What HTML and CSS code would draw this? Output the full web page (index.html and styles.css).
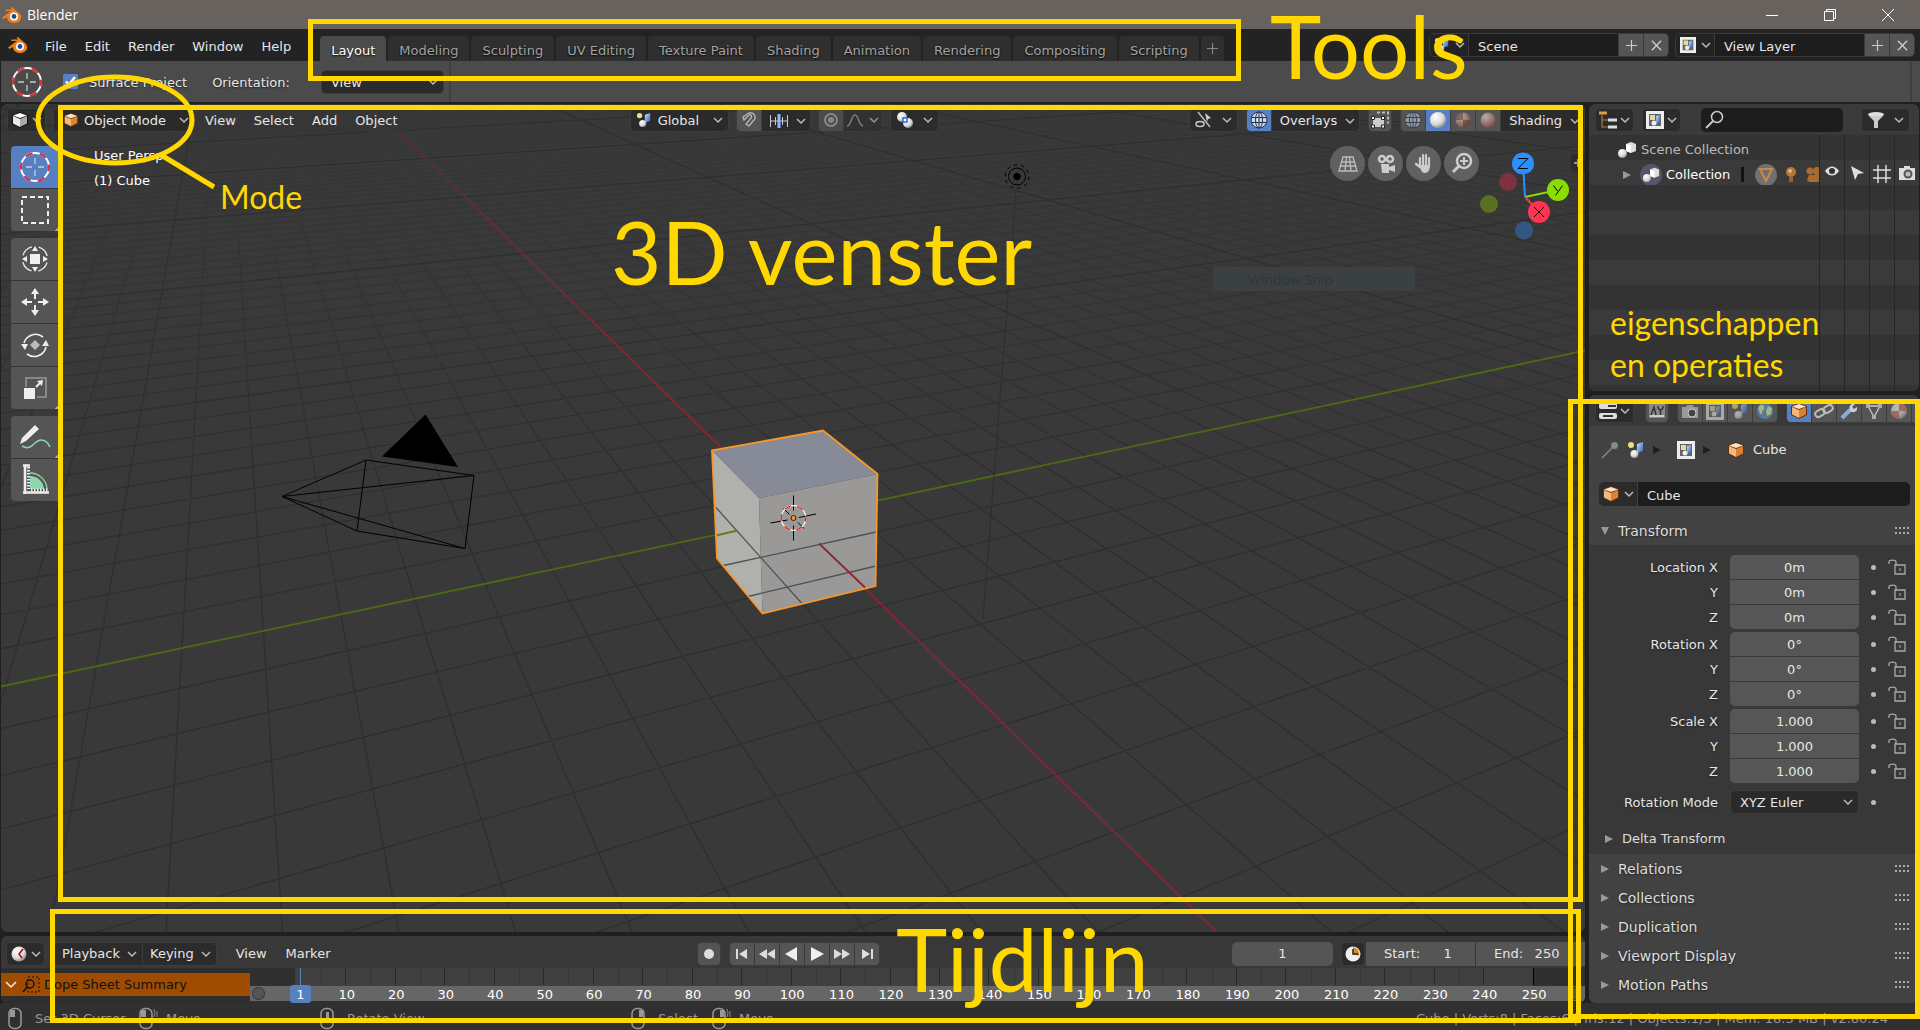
FILE: index.html
```html
<!DOCTYPE html>
<html lang="nl">
<head>
<meta charset="utf-8">
<title>Blender</title>
<link rel="stylesheet" href="styles.css">
</head>
<body>
<svg class="defs" aria-hidden="true">
  <defs>
    <linearGradient id="gBlue" x1="0" y1="0" x2="1" y2="1"><stop offset="0" stop-color="#cfe0f8"/><stop offset="1" stop-color="#2a62c0"/></linearGradient>
    <radialGradient id="gBall" cx=".35" cy=".3" r=".8"><stop offset="0" stop-color="#fff"/><stop offset=".6" stop-color="#d8d8d8"/><stop offset="1" stop-color="#777"/></radialGradient>
    <radialGradient id="gRed" cx=".35" cy=".3" r=".8"><stop offset="0" stop-color="#b8aeaa"/><stop offset="1" stop-color="#74493f"/></radialGradient>
  </defs>
  <symbol id="chev" viewBox="0 0 10 10"><path d="M1 3l4 4 4-4" fill="none" stroke="#bbb" stroke-width="1.5"/></symbol>
  <symbol id="plus" viewBox="0 0 14 14"><path d="M7 1v12M1 7h12" stroke="#ccc" stroke-width="1.3"/></symbol>
  <symbol id="cross" viewBox="0 0 14 14"><path d="M2 2l10 10M12 2L2 12" stroke="#ccc" stroke-width="1.5"/></symbol>
  <symbol id="logo" viewBox="0 0 20 16"><path d="M0 10.500L9 4H3.500V2.500H10L8.500 1 10 0l8 7c3 4 0 9-6 9-4 0-7-2.500-7-6l-3.500 2z" fill="#ee7f1a"/><circle cx="12" cy="9.500" r="4" fill="#fff"/><circle cx="12" cy="9.500" r="2.400" fill="#174f9c"/></symbol>
  <symbol id="cubeW" viewBox="0 0 18 18"><path d="M9 1l8 3v9l-8 4-8-4V4z" fill="#111"/><path d="M2 5l7 3v8l-7-3.500z" fill="#e8e8e8"/><path d="M9 8l7-3v7.500L9 16z" fill="#aaa"/><path d="M2 4.500L9 2l7 2.500L9 7z" fill="#fff"/></symbol>
  <symbol id="cubeO" viewBox="0 0 18 18"><path d="M9 1l8 3v9l-8 4-8-4V4z" fill="#5b3013"/><path d="M2 5l7 3v8l-7-3.500z" fill="#f3b67c"/><path d="M9 8l7-3v7.500L9 16z" fill="#dd8232"/><path d="M2 4.500L9 2l7 2.500L9 7z" fill="#ffe3c0"/></symbol>
  <symbol id="scene" viewBox="0 0 18 18"><circle cx="4" cy="4" r="3" fill="#e9e17a"/><path d="M10 3l6-2v9l-6 2z" fill="url(#gBlue)"/><circle cx="7.500" cy="13" r="4" fill="url(#gBall)"/></symbol>
  <symbol id="layer" viewBox="0 0 18 18"><path d="M0 0h18v18H0z" fill="#eee"/><path d="M3 3h12v12H3z" fill="#60646a"/><path d="M4 4h5v5H4z" fill="#ead99a"/><path d="M10 5l4-1v7l-4 1z" fill="url(#gBlue)"/><circle cx="8" cy="12" r="2.500" fill="#eee"/></symbol>
  <symbol id="cursor" viewBox="0 0 32 32"><circle cx="16" cy="16" r="14" fill="none" stroke="#fff" stroke-width="2"/><circle cx="16" cy="16" r="14" fill="none" stroke="#d92b36" stroke-width="2" stroke-dasharray="7.330 7.330" stroke-dashoffset="3"/><path d="M16 7v6M16 19v6M7 16h6M19 16h6" stroke="#ccc" stroke-width="1.300"/></symbol>
  <symbol id="coll" viewBox="0 0 20 20"><path d="M9 4l5-2 5 2v7l-5 2-5-2z" fill="#ddd"/><path d="M9 4l5 1.500V13l-5-2z" fill="#fff"/><circle cx="5.500" cy="13.500" r="4.500" fill="url(#gBall)"/></symbol>
  <symbol id="mouse" viewBox="0 0 20 24"><rect x="2" y="1.500" width="12" height="20" rx="5" fill="none" stroke="#999" stroke-width="1.500"/></symbol>
  <symbol id="lock" viewBox="0 0 18 16"><path d="M1 5V3c0-2.500 7-2.500 7 0v3M7 6h10v9H7z" fill="none" stroke="#aaa" stroke-width="1.300"/><path d="M12 9v3" stroke="#aaa"/></symbol>
  <symbol id="grip" viewBox="0 0 14 7"><path d="M0 1h14M0 6h14" stroke="#aaa" stroke-width="2" stroke-dasharray="2 2"/></symbol>
  <symbol id="tri" viewBox="0 0 8 8"><path d="M0 0l8 4-8 4z" fill="#999"/></symbol>
  <symbol id="globe" viewBox="0 0 18 18"><circle cx="9" cy="9" r="8" fill="#c9d8f2"/><ellipse cx="9" cy="9" rx="3.500" ry="8" fill="none" stroke="#234"/><path d="M9 1v16M1.500 6.500h15M1.500 11.500h15" stroke="#234"/><circle cx="9" cy="9" r="8" fill="none" stroke="#234"/></symbol>
</svg>

<div class="app">
  <header class="titlebar">
    <svg class="i-logo"><use href="#logo"/></svg>
    <span class="apptitle">Blender</span>
    <div class="winbtns">
      <button aria-label="Minimize"><svg width="12" height="12"><path d="M0 6.500h12" stroke="#fff"/></svg></button>
      <button aria-label="Restore"><svg width="12" height="12"><path d="M.5 2.500h9v9h-9zM2.500 2V.5h9v9H10" fill="none" stroke="#fff"/></svg></button>
      <button aria-label="Close"><svg width="12" height="12"><path d="M0 0l12 12M12 0L0 12" stroke="#fff"/></svg></button>
    </div>
  </header>

  <div class="menubar">
    <svg class="i-logo"><use href="#logo"/></svg>
    <nav class="menus"><button>File</button><button>Edit</button><button>Render</button><button>Window</button><button>Help</button></nav>
    <nav class="tabs">
      <button class="on">Layout</button><button>Modeling</button><button>Sculpting</button><button>UV Editing</button><button>Texture Paint</button><button>Shading</button><button>Animation</button><button>Rendering</button><button>Compositing</button><button>Scripting</button><button class="add" aria-label="Add workspace"><svg class="i12 faint"><use href="#plus"/></svg></button>
    </nav>
    <div class="datablocks">
      <div class="datablock"><button class="pick" aria-label="Browse scene"><svg class="i16"><use href="#scene"/></svg><svg class="i10"><use href="#chev"/></svg></button><input aria-label="Scene name" value="Scene"><button aria-label="New scene"><svg class="i12"><use href="#plus"/></svg></button><button aria-label="Remove scene"><svg class="i12"><use href="#cross"/></svg></button></div>
      <div class="datablock"><button class="pick" aria-label="Browse view layer"><svg class="i16"><use href="#layer"/></svg><svg class="i10"><use href="#chev"/></svg></button><input aria-label="View layer name" value="View Layer"><button aria-label="New view layer"><svg class="i12"><use href="#plus"/></svg></button><button aria-label="Remove view layer"><svg class="i12"><use href="#cross"/></svg></button></div>
    </div>
  </div>

  <div class="toolsettings">
    <svg class="i32"><use href="#cursor"/></svg>
    <label class="check"><input type="checkbox" checked><span>Surface Project</span></label>
    <label class="orient"><span>Orientation:</span><span class="drop"><select><option>View</option></select><svg class="i10"><use href="#chev"/></svg></span></label>
    <i class="vsep"></i><i class="vsep last"></i>
  </div>

  <main class="main">
    <div class="left">
      <section class="viewport">
        <svg class="scene" viewBox="1 104 1584 829" preserveAspectRatio="xMidYMid slice">
          <defs>
            <linearGradient id="fade" gradientUnits="userSpaceOnUse" x1="0" y1="104" x2="0" y2="933"><stop offset="0" stop-color="#fff" stop-opacity=".12"/><stop offset=".15" stop-color="#fff" stop-opacity=".35"/><stop offset=".45" stop-color="#fff" stop-opacity=".9"/><stop offset="1" stop-color="#fff"/></linearGradient>
            <mask id="fadeMask" maskUnits="userSpaceOnUse" x="0" y="0" width="1600" height="1000"><rect width="1600" height="1000" fill="url(#fade)"/></mask>
            <linearGradient id="axisX" gradientUnits="userSpaceOnUse" x1="390" y1="123" x2="640" y2="370"><stop offset="0" stop-color="#862434" stop-opacity=".3"/><stop offset="1" stop-color="#862434"/></linearGradient>
          </defs>
          <g mask="url(#fadeMask)"><path id="minor" class="minor"/></g>
          <path id="major" class="major"/>
          <path d="M370 104l351 344M820 545l397 388" stroke="url(#axisX)" stroke-width="1.800"/>
          <path d="M1 687L793 519 1585 351" stroke="#4c6b10" stroke-width="1.800"/>
          <path d="M1016 190L983 620" stroke="#2e2e2e"/>
          <g class="light"><circle cx="1017" cy="177" r="3.300" fill="#000"/><circle cx="1017" cy="177" r="8.500"/><circle cx="1017" cy="177" r="11.800" stroke-dasharray="3.700 3.700"/></g>
          <path d="M425.500 415l32.500 52.500-76-10.500z" fill="#000"/>
          <path class="cam" d="M282 497l84-36.500 108 15.500-9 73-108-17.500zM282 497l192-21M282 497l183 52M366 460.500l-9 71"/>
          <path d="M712 451l111-20 54.500 43.500-118.500 24z" fill="#868b97"/>
          <path d="M712 451l47 47.500 3.500 115.500L717 559z" fill="#b0b1ad"/>
          <path d="M759 498.500l118.500-24-2 112-113 27.500z" fill="#9b9997"/>
          <path d="M716 508l85.500 95.500M723.500 566L876 532.500M748 597l128-30.500" stroke="#505050" stroke-width="1.300"/>
          <path d="M716 536l21.500-5" stroke="#628017" stroke-width="1.800"/><path d="M819 544l46 44" stroke="#8a2533" stroke-width="1.800"/>
          <path d="M712 451l111-20 54.500 43.500-2 112-113 27.500L717 559z" fill="none" stroke="#f9962a" stroke-width="1.800"/>
          <path d="M793.500 496v15M793.500 526v15M770.500 523.500l17-3M799 518l17-3.500M783.500 509l6 6M798 523l6 6" stroke="#000"/>
          <circle cx="793.500" cy="518.500" r="12.300" fill="none" stroke="#fff" stroke-width="1.200"/><circle cx="793.500" cy="518.500" r="12.300" fill="none" stroke="#f00" stroke-width="1.200" stroke-dasharray="6.440 6.440" stroke-dashoffset="3"/>
          <circle cx="793.500" cy="518.500" r="2.500" fill="#f9962a" stroke="#222"/>
        </svg>

        <div class="vheader">
          <button class="box" aria-label="Editor type"><svg class="i18"><use href="#cubeW"/></svg><svg class="i10"><use href="#chev"/></svg></button>
          <label class="drop mode"><svg class="i16"><use href="#cubeO"/></svg><select aria-label="Mode"><option>Object Mode</option></select><svg class="i10"><use href="#chev"/></svg></label>
          <nav class="vmenus"><button>View</button><button>Select</button><button>Add</button><button>Object</button></nav>
          <div class="vmid">
            <label class="drop global"><svg class="i16"><use href="#scene"/></svg><select aria-label="Transform orientation"><option>Global</option></select><svg class="i10"><use href="#chev"/></svg></label>
            <div class="grp"><button class="lit" aria-label="Snap"><svg width="18" height="18"><path d="M3 6l6-4c6-1 8 5 4 8l-4 5-3-2 5-6c2-3-1-4-3-2L4 9z" fill="none" stroke="#bbb" stroke-width="1.300"/></svg></button><button class="wide" aria-label="Snap to"><svg width="18" height="16"><path d="M.5 2v12M17.500 2v12M5.500 4v8M12.500 4v8M0 8h18" stroke="#ccc"/><path d="M9 1v14" stroke="#8fb7ff" stroke-width="3"/></svg><svg class="i10"><use href="#chev"/></svg></button></div>
            <div class="grp dim"><button class="lit" aria-label="Proportional editing"><svg width="18" height="18"><circle cx="9" cy="9" r="6" fill="none" stroke="#aaa" stroke-width="2"/><circle cx="9" cy="9" r="3" fill="#aaa"/></svg></button><button class="prop" aria-label="Falloff"><svg width="18" height="14"><path d="M1 13c5-1 4-11 8-11s3 10 8 11" fill="none" stroke="#999" stroke-width="1.500"/></svg><svg class="i10"><use href="#chev"/></svg></button></div>
            <button class="box pivot" aria-label="Pivot point"><svg width="18" height="18"><circle cx="6" cy="6" r="5" fill="url(#gBall)"/><circle cx="12" cy="12" r="5" fill="url(#gBall)"/><path d="M7 7h4v4H7z" fill="#fff" stroke="#2a6cd8" stroke-width="1.500"/></svg><svg class="i10"><use href="#chev"/></svg></button>
          </div>
          <div class="vright">
            <button class="box pivot" aria-label="Object types"><svg width="18" height="18"><path d="M3 1l12 15" stroke="#bbb" stroke-width="1.500"/><path d="M10 2l6 5-3 1-1 3z" fill="#ccc"/><ellipse cx="5" cy="13" rx="4" ry="2.500" fill="none" stroke="#ccc" stroke-width="1.500"/></svg><svg class="i10"><use href="#chev"/></svg></button>
            <div class="grp"><button class="sel" aria-label="Show overlays"><svg class="i18"><use href="#globe"/></svg></button><button class="wide">Overlays<svg class="i10"><use href="#chev"/></svg></button></div>
            <button class="box lit" aria-label="X-ray"><svg width="20" height="18"><path d="M3 7h11v9H3z" fill="#ccc"/><path d="M1.500 5.500h3v3h-3zM11.500 5.500h3v3h-3zM1.500 14h3v3h-3zM11.500 14h3v3h-3z" fill="#fff" stroke="#222"/><path d="M7 1.500h11v11" fill="none" stroke="#bbb" stroke-width="2" stroke-dasharray="3 2"/></svg></button>
            <div class="grp"><button class="lit" aria-label="Wireframe"><svg class="i18 faint"><use href="#globe"/></svg></button><button class="sel" aria-label="Solid"><svg width="18" height="18"><circle cx="9" cy="9" r="8" fill="url(#gBall)"/></svg></button><button class="lit" aria-label="Look dev"><svg width="18" height="18"><circle cx="9" cy="9" r="7.500" fill="url(#gRed)"/><path d="M9 1.500V9H1.500A7.500 7.500 0 0 1 9 1.500M9 16.500V9h7.500A7.500 7.500 0 0 1 9 16.500" fill="#583028" opacity=".5"/></svg></button><button class="lit" aria-label="Rendered"><svg width="18" height="18"><circle cx="9" cy="9" r="7.500" fill="url(#gRed)"/></svg></button><button class="wide">Shading<svg class="i10"><use href="#chev"/></svg></button></div>
          </div>
        </div>

        <div class="vbody">
          <div class="toolbar">
            <div class="tools">
              <button class="sel" aria-label="Cursor"><svg class="i32"><use href="#cursor"/></svg></button>
              <button class="more" aria-label="Select box"><svg width="32" height="32"><rect x="3" y="3" width="26" height="26" fill="none" stroke="#eee" stroke-width="2" stroke-dasharray="5 3"/></svg></button>
            </div>
            <div class="tools">
              <button aria-label="Transform"><svg width="32" height="32"><path d="M11 11h10v10H11z" fill="#eee"/><path d="M16 3l3 5h-6zM16 29l3-5h-6zM3 16l5-3v6zM29 16l-5-3v6z" fill="#eee"/><circle cx="16" cy="16" r="12.500" fill="none" stroke="#eee" stroke-width="1.300" stroke-dasharray="12.600 7.030" stroke-dashoffset="-3.500"/></svg></button>
              <button aria-label="Move"><svg width="32" height="32"><path d="M16 2l4 6h-8zM16 30l4-6h-8zM2 16l6-4v8zM30 16l-6-4v8z" fill="#eee"/><path d="M16 8v5M16 19v5M8 16h5M19 16h5" stroke="#eee" stroke-width="2"/></svg></button>
              <button aria-label="Rotate"><svg width="32" height="32"><path d="M5 14A12 12 0 0 1 24 8M27 18A12 12 0 0 1 8 25" fill="none" stroke="#eee" stroke-width="1.600"/><path d="M2 15h7l-3 6zM23 17h7l-3-6z" fill="#eee"/><path d="M16 11l5 5-5 5-5-5z" fill="#bbb"/></svg></button>
              <button class="more" aria-label="Scale"><svg width="32" height="32"><path d="M7 15V6h20v19h-9" fill="none" stroke="#999" stroke-width="1.500"/><path d="M5 16h11v11H5z" fill="#eee"/><path d="M17 15l5-5" stroke="#eee" stroke-width="2"/><path d="M24 8l-1 6-5-5z" fill="#eee"/></svg></button>
            </div>
            <div class="tools">
              <button class="more" aria-label="Annotate"><svg width="34" height="32"><path d="M4 25c10 6 12-6 19-6 4 0 7 2 9 7" fill="none" stroke="#8fd6ae" stroke-width="1.600"/><path d="M2 23l2-6L17 4l4 4L8 20z" fill="#eee"/></svg></button>
              <button aria-label="Measure"><svg width="32" height="32"><path d="M11 12a14 14 0 0 1 14 13H11z" fill="#8fd6ae"/><path d="M11 9a17 17 0 0 1 17 16" fill="none" stroke="#8fd6ae" stroke-width="1.300"/><path d="M4 1.500h7M6 2v28M4 28.500h26" stroke="#eee" stroke-width="2.600"/><path d="M9.500 3v22" stroke="#eee" stroke-width="3" stroke-dasharray="1.500 1.500"/><path d="M12 26h18" stroke="#eee" stroke-width="3" stroke-dasharray="1.500 1.500"/></svg></button>
            </div>
          </div>
          <p class="vinfo">User Persp<br>(1) Cube</p>
          <div class="ghost">Window Snip</div>
          <div class="nav">
            <button aria-label="Perspective"><svg width="22" height="20"><path d="M6 3h10l4 14H2zM4.500 8h13M3.500 12h15M9.500 3L8 17M12.500 3L14 17" fill="none" stroke="#bbb" stroke-width="1.400"/></svg></button>
            <button aria-label="Camera view"><svg width="22" height="22"><circle cx="7" cy="6" r="3" fill="none" stroke="#ccc" stroke-width="2.500"/><circle cx="15" cy="6" r="3" fill="none" stroke="#ccc" stroke-width="2.500"/><path d="M6 11h8v3l6-2v7l-6-2v3H7z" fill="#ccc"/></svg></button>
            <button aria-label="Move view"><svg width="22" height="22"><path d="M3 11l4 3M7 13V5M10 12V2M13 12V2M16 13V5" stroke="#ccc" stroke-width="2.200" stroke-linecap="round"/><path d="M6 12h11c0 5-2 8-5 8s-4-2-6-8z" fill="#ccc"/></svg></button>
            <button aria-label="Zoom view"><svg width="24" height="24"><circle cx="14" cy="9" r="7" fill="none" stroke="#ccc" stroke-width="2.500"/><path d="M14 5v8M10 9h8" stroke="#ccc" stroke-width="2"/><path d="M9 14l-6 6" stroke="#ccc" stroke-width="3"/></svg></button>
            <svg class="gizmo" viewBox="0 0 90 96"><circle cx="28" cy="36" r="9" fill="#7d323f"/><circle cx="9" cy="58" r="9" fill="#587020"/><circle cx="44" cy="84.500" r="9" fill="#335880"/><path d="M43 18l2 33" stroke="#2b90ff" stroke-width="2"/><path d="M45 51l33-7" stroke="#8bdc00" stroke-width="2"/><path d="M45 51l14 15" stroke="#ff3352" stroke-width="2"/><circle cx="43" cy="17.500" r="11" fill="#2b90ff"/><circle cx="78" cy="44" r="11" fill="#8bdc00"/><circle cx="59" cy="66" r="11" fill="#ff3352"/><path d="M38 12.500h10l-10 10h10M73.500 39.500l4 5.500M82.500 39.500l-7 10M54 61l10 10M64 61L54 71" fill="none" stroke="#000"/></svg>
            <button class="npanel" aria-label="Show sidebar"><svg width="10" height="10"><path d="M5 1v8M1 5h8" stroke="#999" stroke-width="2"/></svg></button>
          </div>
        </div>
      </section>

      <section class="timeline">
        <div class="theader">
          <button class="box" aria-label="Editor type"><svg width="18" height="18"><circle cx="9" cy="9" r="7.500" fill="url(#gBall)"/><path d="M13 4L9 9l3 4" fill="none" stroke="#b00" stroke-width="1.500"/></svg><svg class="i10"><use href="#chev"/></svg></button>
          <div class="grp"><button class="wide">Playback<svg class="i10"><use href="#chev"/></svg></button><button class="wide">Keying<svg class="i10"><use href="#chev"/></svg></button></div>
          <nav class="tmenus"><button>View</button><button>Marker</button></nav>
          <div class="transport">
            <button class="box lit rec" aria-label="Auto keying"><svg width="12" height="12"><circle cx="6" cy="6" r="5" fill="#ddd"/></svg></button>
            <div class="grp play">
              <button aria-label="Jump to start"><svg width="14" height="12"><path d="M1 1h2v10H1zM12 1v10L4 6z" fill="#ddd"/></svg></button>
              <button aria-label="Previous keyframe"><svg width="16" height="12"><path d="M8 1v10L0 6zM16 1v10L8 6z" fill="#ddd"/></svg></button>
              <button aria-label="Play reversed"><svg width="14" height="16"><path d="M12 1v14L0 8z" fill="#eee"/></svg></button>
              <button aria-label="Play"><svg width="14" height="16"><path d="M1 1v14l13-7z" fill="#eee"/></svg></button>
              <button aria-label="Next keyframe"><svg width="16" height="12"><path d="M0 1v10l8-5zM8 1v10l8-5z" fill="#ddd"/></svg></button>
              <button aria-label="Jump to end"><svg width="14" height="12"><path d="M11 1h2v10h-2zM2 1v10l8-5z" fill="#ddd"/></svg></button>
            </div>
          </div>
          <div class="frames">
            <input class="cur" aria-label="Current frame" value="1">
            <div class="range"><button class="box" aria-label="Preview range"><svg width="18" height="18"><circle cx="9" cy="9" r="7.500" fill="#eee"/><path d="M9 9V2a7 7 0 0 1 6 9z" fill="#e0852c"/><path d="M9 4v5h5" stroke="#222" stroke-width="1.500"/></svg></button>
            <label>Start:<input value="1"></label><label>End:<input value="250"></label></div>
          </div>
        </div>
        <div class="tbody">
          <div class="channels"><div class="channel"><svg width="14" height="14"><path d="M2 4l5 5 5-5" fill="none" stroke="#eee" stroke-width="1.500"/></svg><svg width="18" height="18"><rect x="6" y="1" width="11" height="15" fill="none" stroke="#111" stroke-dasharray="2 2"/><circle cx="8" cy="8" r="4" fill="none" stroke="#111" stroke-width="1.500"/><path d="M5 11l-4 5" stroke="#111" stroke-width="1.500"/></svg>Dope Sheet Summary</div></div>
          <div class="graph">
            <div class="pre"><i class="knob"></i><b>1</b></div>
            <ol class="ruler"><li>10</li><li>20</li><li>30</li><li>40</li><li>50</li><li>60</li><li>70</li><li>80</li><li>90</li><li>100</li><li>110</li><li>120</li><li>130</li><li>140</li><li>150</li><li>160</li><li>170</li><li>180</li><li>190</li><li>200</li><li>210</li><li>220</li><li>230</li><li>240</li><li>250</li></ol>
            <div class="post"><i class="knob"></i></div>
          </div>
        </div>
      </section>
    </div>

    <aside class="right">
      <section class="outliner">
        <div class="oheader">
          <button class="box" aria-label="Editor type"><svg width="18" height="18"><path d="M0 2h8" stroke="#e29a45" stroke-width="3"/><path d="M3 4v12h6M3 9h6" fill="none" stroke="#ad7b42" stroke-width="1.200"/><path d="M9 9h9M9 16h9" stroke="#ddd" stroke-width="3"/></svg><svg class="i10"><use href="#chev"/></svg></button>
          <button class="box" aria-label="Display mode"><svg class="i18"><use href="#layer"/></svg><svg class="i10"><use href="#chev"/></svg></button>
          <label class="search"><svg width="20" height="20"><circle cx="12" cy="7" r="5.500" fill="none" stroke="#ccc" stroke-width="1.500"/><path d="M8 11l-7 7" stroke="#ccc" stroke-width="1.800"/></svg><input type="search" aria-label="Filter outliner"></label>
          <button class="box filter" aria-label="Filter"><svg width="18" height="18"><ellipse cx="9" cy="3.500" rx="8" ry="2.500" fill="#ddd"/><path d="M2 5l5 5v7h4v-7l5-5z" fill="#ccc"/></svg><svg class="i10"><use href="#chev"/></svg></button>
        </div>
        <div class="tree">
          <div class="row root"><svg class="i20"><use href="#coll"/></svg>Scene Collection</div>
          <div class="row child"><svg class="i8"><use href="#tri"/></svg><span class="disc"><svg class="i18"><use href="#coll"/></svg></span><span class="name">Collection</span><i class="bar"></i>
            <span class="disc mesh"><svg width="16" height="16"><path d="M2 2h12L8 14z" fill="none" stroke="#c98647" stroke-width="2.200"/></svg></span>
            <svg width="14" height="20"><circle cx="7" cy="7" r="5" fill="#b47538"/><path d="M5 12h4v5H5z" fill="#976233"/><circle cx="6" cy="6" r="2" fill="#e0b27c"/></svg>
            <svg width="14" height="18"><circle cx="4" cy="5" r="3.500" fill="#ac6b2d"/><circle cx="11" cy="5" r="4" fill="#ac6b2d"/><path d="M3 9h11v7H3l-2-2z" fill="#ac6b2d"/></svg>
          </div>
          <div class="cols">
            <span><svg width="16" height="12"><path d="M1 6c4-6 10-6 14 0-4 6-10 6-14 0z" fill="#ddd"/><circle cx="8" cy="6" r="3" fill="#333"/></svg></span>
            <span><svg width="16" height="16"><path d="M2 1l13 7-6 1-3 6z" fill="#ddd"/></svg></span>
            <span><svg width="18" height="18"><path d="M5 0v18M13 0v18M0 5h18M0 13h18" stroke="#ddd" stroke-width="1.500"/></svg></span>
            <span><svg width="18" height="16"><path d="M1 3h5V1h6v2h5v12H1z" fill="#ddd"/><circle cx="10" cy="9" r="4.500" fill="#555"/><circle cx="10" cy="9" r="2.500" fill="#bbb"/></svg></span>
          </div>
        </div>
      </section>

      <section class="props">
        <div class="pheader">
          <button class="box" aria-label="Editor type"><svg width="18" height="18"><rect y="1" width="18" height="6" rx="2" fill="#ddd"/><rect y="11" width="18" height="6" rx="2" fill="#ddd"/><path d="M9 4h8M4 14h10" stroke="#333" stroke-width="2"/></svg><svg class="i10"><use href="#chev"/></svg></button>
          <button class="box lit tool" aria-label="Tool"><svg width="18" height="18"><path d="M1 2h16v14H1z" fill="#888"/><path d="M2 14h14" stroke="#ccc" stroke-width="2"/><path d="M3 13l3-8 2 8M10 4c-1 5 6 5 5 0M12.500 8v5" stroke="#333" stroke-width="1.500" fill="none"/></svg></button>
          <div class="grp ptabs"><button aria-label="Render"><svg width="18" height="18"><path d="M1 5h4l1-2h6l1 2h4v11H1z" fill="#999"/><circle cx="11" cy="11" r="4" fill="#444" stroke="#ccc"/></svg></button><button aria-label="View layer"><svg class="i18 faint"><use href="#layer"/></svg></button><button aria-label="Scene"><svg class="i18 faint"><use href="#scene"/></svg></button><button aria-label="World"><svg width="18" height="18"><circle cx="9" cy="9" r="8" fill="#57799c"/><path d="M3 4c4-3 6 0 5 3s-2 0-2 4-5-3-3-7M12 4l4 2-1 6-4 2-1-5z" fill="#a4b87c"/></svg></button></div>
          <div class="grp ptabs open"><button class="sel" aria-label="Object"><svg class="i18"><use href="#cubeO"/></svg></button><button aria-label="Constraints"><svg width="20" height="20"><g fill="none" stroke="#bbb" stroke-width="2"><rect x="1" y="9" width="10" height="6" rx="3" transform="rotate(-30 6 12)"/><rect x="9" y="5" width="10" height="6" rx="3" transform="rotate(-30 14 8)"/></g></svg></button><button aria-label="Modifiers"><svg width="18" height="18"><path d="M2 16l8-8" stroke="#8cabd6" stroke-width="4"/><path d="M10 9c-2-4 1-8 5-7l-3 3 2 2 3-2c1 4-3 7-7 4" fill="#c5d1e0"/></svg></button><button aria-label="Mesh"><svg width="18" height="18"><path d="M3 4h12L9 15z" fill="none" stroke="#ccc" stroke-width="1.300"/><path d="M1 2h4v4H1zM13 2h4v4h-4zM7 13h4v4H7z" fill="#aaa"/></svg></button><button aria-label="Material"><svg width="18" height="18"><circle cx="9" cy="9" r="8" fill="url(#gBall)" opacity=".6"/><path d="M9 1v8h8A8 8 0 0 0 9 1M9 17V9H1a8 8 0 0 0 8 8" fill="#9b5248" opacity=".7"/></svg></button><button aria-label="Texture"><svg width="18" height="18"><path d="M1 1h16v16H1z" fill="#ddd"/><path d="M1 1h4v4H1zM9 1h4v4H9zM5 5h4v4H5zM1 9h4v4H1zM5 13h4v4H5z" fill="#a53d36"/></svg></button></div>
        </div>
        <div class="crumbs"><svg width="18" height="18"><path d="M1 17L12 6" stroke="#888" stroke-width="1.500"/><circle cx="13.500" cy="4.500" r="3.500" fill="#888"/></svg><svg class="i18"><use href="#scene"/></svg><svg class="i8 dark"><use href="#tri"/></svg><svg class="i18 gap"><use href="#layer"/></svg><svg class="i8 dark"><use href="#tri"/></svg><svg class="i18 gap"><use href="#cubeO"/></svg>Cube</div>
        <div class="idrow"><button class="pick" aria-label="Browse object"><svg class="i18"><use href="#cubeO"/></svg><svg class="i10"><use href="#chev"/></svg></button><input aria-label="Object name" value="Cube"></div>
        <button class="panel"><svg class="i8 down"><use href="#tri"/></svg>Transform<svg class="grip"><use href="#grip"/></svg></button>
        <div class="transform">
          <div class="trio">
            <label for="lx">Location X</label><input id="lx" value="0m"><i></i><svg class="lock"><use href="#lock"/></svg>
            <label for="ly">Y</label><input id="ly" value="0m"><i></i><svg class="lock"><use href="#lock"/></svg>
            <label for="lz">Z</label><input id="lz" value="0m"><i></i><svg class="lock"><use href="#lock"/></svg>
          </div>
          <div class="trio">
            <label for="rx">Rotation X</label><input id="rx" value="0°"><i></i><svg class="lock"><use href="#lock"/></svg>
            <label for="ry">Y</label><input id="ry" value="0°"><i></i><svg class="lock"><use href="#lock"/></svg>
            <label for="rz">Z</label><input id="rz" value="0°"><i></i><svg class="lock"><use href="#lock"/></svg>
          </div>
          <div class="trio">
            <label for="sx">Scale X</label><input id="sx" value="1.000"><i></i><svg class="lock"><use href="#lock"/></svg>
            <label for="sy">Y</label><input id="sy" value="1.000"><i></i><svg class="lock"><use href="#lock"/></svg>
            <label for="sz">Z</label><input id="sz" value="1.000"><i></i><svg class="lock"><use href="#lock"/></svg>
          </div>
          <div class="trio rot"><label for="rm">Rotation Mode</label><span class="drop"><select id="rm"><option>XYZ Euler</option></select><svg class="i10"><use href="#chev"/></svg></span><i></i></div>
          <button class="sub"><svg class="i8"><use href="#tri"/></svg>Delta Transform</button>
        </div>
        <button class="panel"><svg class="i8"><use href="#tri"/></svg>Relations<svg class="grip"><use href="#grip"/></svg></button>
        <button class="panel"><svg class="i8"><use href="#tri"/></svg>Collections<svg class="grip"><use href="#grip"/></svg></button>
        <button class="panel"><svg class="i8"><use href="#tri"/></svg>Duplication<svg class="grip"><use href="#grip"/></svg></button>
        <button class="panel"><svg class="i8"><use href="#tri"/></svg>Viewport Display<svg class="grip"><use href="#grip"/></svg></button>
        <button class="panel"><svg class="i8"><use href="#tri"/></svg>Motion Paths<svg class="grip"><use href="#grip"/></svg></button>
      </section>
    </aside>
  </main>

  <footer class="status">
    <span class="hint h1"><svg class="ms"><use href="#mouse"/><path d="M3 3h5v7H3z" fill="#999"/></svg>Set 3D Cursor</span>
    <span class="hint h2"><svg class="ms"><use href="#mouse"/><path d="M3 3h5v7H3z" fill="#999"/><path d="M16 2q2 4 0 8M19 4v6" stroke="#888" fill="none"/></svg>Move</span>
    <span class="hint h3"><svg class="ms"><use href="#mouse"/><path d="M7 5h3v9H7z" fill="#999"/></svg>Rotate View</span>
    <span class="hint h4"><svg class="ms"><use href="#mouse"/><path d="M9 3h4v7H9z" fill="#999"/></svg>Select</span>
    <span class="hint"><svg class="ms"><use href="#mouse"/><path d="M9 3h4v7H9z" fill="#999"/><path d="M16 2q2 4 0 8M19 4v6" stroke="#888" fill="none"/></svg>Move</span>
    <span class="stats">Cube | Verts:8 | Faces:6 | Tris:12 | Objects:1/3 | Mem: 18.3 MB | v2.80.24</span>
  </footer>

  <div class="notes">
    <div class="frame f-tools"></div>
    <div class="frame f-view"></div>
    <div class="frame f-time"></div>
    <div class="frame f-props"></div>
    <svg class="callout" width="220" height="150"><ellipse cx="81" cy="50" rx="77" ry="43" fill="none" stroke="#ffd800" stroke-width="5"/><path d="M127 85l53 32" stroke="#ffd800" stroke-width="5"/></svg>
    <span class="note big n-tools">Tools</span>
    <span class="note small n-mode">Mode</span>
    <span class="note big n-view">3D venster</span>
    <span class="note small n-props">eigenschappen<br>en operaties</span>
    <span class="note big n-time">Tijdlijn</span>
  </div>
</div>
<script src="grid.js"></script>
</body>
</html>
```

FILE: grid.js
```js
// Projects the ground grid of the 3D viewport into the scene drawing.
(function () {
  var cx = 793, cy = 519, focal = 1095, dist = 18;
  var cosT = 0.4217, sinT = 0.9067, sinE = 0.456, cosE = 0.89;
  var reach = 120, near = 2;

  function depth(x, y) { return dist - (sinT * cosE * x - cosT * cosE * y); }

  function project(x, y) {
    var s = focal / depth(x, y);
    return (cx + (cosT * x + sinT * y) * s).toFixed(1) + ' ' +
           (cy - (cosT * y - sinT * x) * sinE * s).toFixed(1);
  }

  // Segment between two ground points, cut where it passes behind the camera.
  function segment(a, b) {
    var da = depth(a[0], a[1]), db = depth(b[0], b[1]);
    if (da < near && db < near) return '';
    var t = (near - da) / (db - da);
    var cut = [a[0] + (b[0] - a[0]) * t, a[1] + (b[1] - a[1]) * t];
    if (da < near) a = cut;
    if (db < near) b = cut;
    return 'M' + project(a[0], a[1]) + 'L' + project(b[0], b[1]);
  }

  var minor = '', major = '';
  for (var i = -reach; i <= reach; i++) {
    if (i === 0) continue;
    var d = segment([i, -reach], [i, reach]) + segment([-reach, i], [reach, i]);
    if (i % 10 === 0) major += d; else minor += d;
  }
  document.getElementById('minor').setAttribute('d', minor);
  document.getElementById('major').setAttribute('d', major);
})();
```

FILE: styles.css
```css
* { box-sizing: border-box; }
body { margin: 0; background: #1f1f1f; color: #e6e6e6; font: 13px/16px "DejaVu Sans", sans-serif; }
button, input, select { font: inherit; color: inherit; border: 0; margin: 0; padding: 0; background: none; }
button { display: flex; flex: none; align-items: center; justify-content: center; white-space: nowrap; }
select { appearance: none; flex: 1; min-width: 0; padding-top: 2px; }
input { min-width: 0; }
svg { flex: none; fill: none; }
.defs { position: absolute; width: 0; height: 0; }
i, b { font-style: normal; font-weight: normal; }

.i8 { width: 8px; height: 8px; }
.i10 { width: 10px; height: 10px; }
.i12 { width: 13px; height: 13px; }
.i16 { width: 16px; height: 16px; }
.i18 { width: 18px; height: 18px; }
.i20 { width: 20px; height: 20px; }
.i32 { width: 32px; height: 32px; }
.i-logo { width: 20px; height: 16px; }
.faint { opacity: .55; }

.app { position: relative; display: flex; flex-direction: column; min-height: 100vh; overflow: hidden; }

.titlebar { display: flex; align-items: center; height: 29px; padding-left: 2px; gap: 5px; background: #68625e; color: #fff; font: 14px/20px "Open Sans", sans-serif; }
.winbtns { display: flex; margin-left: auto; padding-right: 3px; }
.winbtns button { width: 58px; height: 28px; }

.menubar { display: flex; align-items: stretch; height: 32px; padding: 0 5px 0 8px; background: #232323; }
.menubar > .i-logo { align-self: center; }
.menus { display: flex; align-items: center; padding-left: 8px; }
.menus button { padding: 4px 9px 0; height: 24px; }
.tabs { display: flex; align-items: flex-end; gap: 2px; margin-left: 20px; }
.tabs button { height: 25px; padding: 4px 11px 0; background: #2f2f2f; color: #a3a3a3; border-radius: 4px 4px 0 0; text-shadow: 0 1px 2px #000; }
.tabs .on { background: #4b4b4b; color: #fff; }
.tabs .add { padding: 0 5px; }
.datablocks { display: flex; align-items: center; gap: 6px; margin-left: auto; }
.datablock { display: flex; gap: 1px; height: 24px; border: 1px solid #3a3a3a; border-radius: 5px; overflow: hidden; background: #3a3a3a; }
.datablock button { width: 24px; background: #555; }
.datablock .pick { width: 38px; gap: 5px; background: #232323; }
.datablock input { width: 149px; padding: 4px 9px 0; background: #1d1d1d; }

.toolsettings { display: flex; align-items: center; height: 41px; padding-left: 10px; margin-left: 1px; background: #4b4b4b; text-shadow: 0 1px 2px #222; }
.toolsettings span:not(.drop) { padding-top: 3px; }
.check { display: flex; align-items: center; gap: 11px; margin-left: 20px; }
.check input { width: 15px; height: 15px; accent-color: #5680c2; }
.orient { display: flex; align-items: center; gap: 31px; margin-left: 25px; }
.drop { display: flex; align-items: center; height: 24px; padding: 0 5px 0 9px; border: 1px solid #3c3c3c; border-radius: 5px; background: #2a2a2a; }
.orient .drop { width: 123px; }
.vsep { width: 2px; height: 40px; margin-left: 5px; background: #3f3f3f; }
.vsep.last { margin: 0 8px 0 auto; }

.main { display: flex; flex: 1; gap: 4px; padding: 2px 1px 0; }
.left { display: flex; flex: 1; flex-direction: column; gap: 4px; min-width: 0; }
.right { display: flex; flex-direction: column; gap: 4px; width: 330px; }

.viewport { position: relative; display: flex; flex: 1; flex-direction: column; min-height: 600px; border-radius: 6px; overflow: hidden; background: #393939; }
.scene { position: absolute; inset: 0; width: 100%; height: 100%; }
.minor { stroke: #2e2e2e; stroke-width: 1.3; }
.major { stroke: #2f2f2f; stroke-width: 1.3; }
.cam { stroke: #000; stroke-width: 1; }
.light circle { stroke: #000; stroke-width: 1; }

.vheader { position: relative; display: flex; align-items: center; height: 31px; padding: 1px 0 0 6px; }
.box { height: 24px; padding: 0 3px; gap: 3px; border: 1px solid #3d3d3d; border-radius: 5px; background: #2b2b2b; }
.lit, .box.lit { background: #545454; }
.sel { background: #5680c2; }
.mode { width: 142px; gap: 5px; margin-left: 7px; }
.vmenus { display: flex; gap: 2px; margin-left: 2px; }
.vmenus button { height: 24px; padding: 2px 8px 0; border-radius: 4px; background: #363636; }
.vmid { display: flex; gap: 7px; margin: 0 auto; padding-right: 26px; }
.vright { display: flex; gap: 8px; }
.global { width: 99px; gap: 6px; padding-left: 5px; }
.grp { display: flex; gap: 1px; height: 24px; border: 1px solid #3d3d3d; border-radius: 5px; overflow: hidden; background: #3d3d3d; }
.grp button { width: 24px; }
.grp .wide { width: auto; gap: 8px; padding: 1px 4px 0 8px; background: #2b2b2b; }
.prop { background: #303030; }
.grp .prop { width: 38px; gap: 5px; }
.dim { opacity: .7; }
.vheader .pivot { width: 49px; gap: 9px; }
.box.lit { width: 24px; padding: 0; }

.vbody { position: relative; display: flex; flex: 1; padding: 11px 0 0 10px; }
.toolbar { display: flex; flex-direction: column; gap: 7px; width: 48px; }
.tools { display: flex; flex-direction: column; gap: 1px; border-radius: 4px 0 0 4px; overflow: hidden; background: #333; }
.tools button { width: 48px; height: 42px; background: #555; }
.tools .sel { background: #5680c2; }
.tools .more { background: linear-gradient(135deg, #555 95%, #aaa 95%); }
.vinfo { margin: -3px 0 0 35px; line-height: 25px; color: #fff; }
.ghost { align-self: flex-start; width: 202px; height: 24px; margin: 121px 170px 0 auto; padding: 3px 0 0 35px; background: #3b4143; color: #303435; font: 14px/20px "Open Sans", sans-serif; }
.nav { position: absolute; top: 11px; right: 0; display: flex; align-items: flex-start; gap: 3px; }
.nav button { width: 35px; height: 35px; border-radius: 50%; background: #606060; }
.gizmo { width: 90px; height: 96px; }
.nav .gizmo { margin-left: -2px; }
.nav .npanel { width: 14px; height: 18px; margin: 8px 0 0 -2px; border-radius: 4px 0 0 4px; background: #2c2c2c; }

.timeline { height: 67px; border-radius: 6px; overflow: hidden; background: #383838; }
.theader { display: flex; align-items: center; height: 32px; padding: 3px 0 0 5px; }
.theader > .grp { margin-left: 9px; }
.theader .wide { gap: 7px; padding: 1px 5px 0 7px; }
.tmenus { display: flex; gap: 19px; margin-left: 19px; }
.transport { display: flex; gap: 8px; margin: 0 auto; padding-left: 14px; }
.play button { background: #555; }
.play { background: #3a3a3a; }
.frames { display: flex; gap: 8px; }
.frames input { text-align: center; }
.cur { width: 101px; height: 24px; border-radius: 5px; background: #555; }
.range { display: flex; gap: 1px; height: 24px; }
.range label { display: flex; align-items: center; width: 109px; padding-left: 18px; background: #555; }
.range label:last-child { padding-right: 14px; }
.range .box { width: 24px; padding: 0; }
.range input { flex: 1; width: 40px; }
.tbody { display: flex; height: 35px; }
.channels { width: 249px; padding-top: 5px; background: #2e2e2e; }
.channel { display: flex; align-items: center; gap: 4px; height: 23px; padding-left: 3px; background: #a04c00; color: #111; }
.graph { display: flex; flex: 1; min-width: 0; background: linear-gradient(transparent 18px, #666 18px, #666 33px, #303030 33px); color: #fff; }
.pre { position: relative; width: 71px; background: linear-gradient(#303030, #303030) 0 0 / 45px 18px no-repeat, linear-gradient(#404040, #404040) 0 0 / 100% 18px no-repeat; }
.pre b { position: absolute; left: 40px; top: 17px; width: 21px; height: 18px; border-radius: 3px; background: #5680c2; text-align: center; line-height: 19px; }
.pre b::before { content: ""; position: absolute; left: 10px; bottom: 18px; width: 1px; height: 17px; background: #5680c2; }
.knob { display: block; width: 13px; height: 13px; margin: 19px 0 0 2px; border-radius: 50%; border: 1px solid #333; background: #555; }
.ruler { display: grid; grid-template-columns: repeat(25, minmax(0, 1fr)); flex: 1; margin: 0; padding: 0; list-style: none; }
.ruler li { padding: 19px 0 0 2px; text-align: center; background: linear-gradient(#2a2a2a, #2a2a2a) 50% 0 / 1px 17px no-repeat, linear-gradient(#353535, #353535) 0 0 / 1px 17px no-repeat, linear-gradient(#404040, #404040) 0 0 / 100% 18px no-repeat; }
.ruler li:last-child { background: linear-gradient(#000, #000) 50% 0 / 1px 17px no-repeat, linear-gradient(90deg, #404040 50%, #303030 50%) 0 0 / 100% 18px no-repeat; }
.post { width: 27px; padding-left: 8px; background: linear-gradient(#303030, #303030) 0 0 / 100% 18px no-repeat; }

.outliner { display: flex; flex-direction: column; height: 287px; border-radius: 6px; overflow: hidden; background: #3a3a3a; }
.oheader { display: flex; align-items: center; gap: 8px; height: 31px; padding: 0 9px 0 6px; }
.search { display: flex; align-items: center; width: 142px; height: 24px; margin-left: 12px; padding-left: 4px; border-radius: 5px; background: #1d1d1d; }
.search input { width: 100px; }
.oheader .filter { width: 49px; margin-left: auto; gap: 9px; }
.tree { position: relative; flex: 1; background: repeating-linear-gradient(#333 0 25px, #3a3a3a 25px 50px); }
.row { display: flex; align-items: center; height: 25px; padding-top: 4px; }
.root { gap: 4px; padding-left: 28px; color: #bbb; }
.child { padding-left: 34px; color: #fff; width: 232px; overflow: hidden; }
.disc { display: flex; align-items: center; justify-content: center; width: 22px; height: 22px; margin: 0 4px 0 9px; border-radius: 50%; background: #55556a; }
.mesh { margin: 0 7px 0 11px; background: #707070; }
.child .bar { width: 3px; height: 15px; margin-left: 11px; background: #111; }
.child svg + svg { margin-left: 8px; }
.cols { position: absolute; top: 0; right: 0; bottom: 0; display: grid; grid-template-columns: repeat(4, 25px); }
.cols span { display: flex; justify-content: center; align-items: flex-start; border-left: 1px solid #262626; }
.cols svg { height: 76px; padding-top: 30px; overflow: visible; }

.props { display: flex; flex: 1; flex-direction: column; border-radius: 6px; overflow: hidden; background: #424242; }
.pheader { display: flex; align-items: center; height: 31px; padding-left: 6px; background: #383838; overflow: hidden; }
.pheader .tool { margin-left: 11px; }
.ptabs { flex: none; margin-left: 8px; }
.ptabs button { background: #555; }
.ptabs .sel { background: #5680c2; }
.open { border-right: 0; border-radius: 5px 0 0 5px; }
.crumbs { display: flex; align-items: center; gap: 8px; height: 49px; padding: 0 0 1px 12px; }
.crumbs .gap { margin-left: 8px; }
.dark { filter: brightness(.2); }
.idrow { display: flex; gap: 1px; height: 24px; margin: 7px 9px 10px 10px; border-radius: 5px; overflow: hidden; }
.idrow .pick { width: 38px; gap: 4px; background: #2b2b2b; }
.idrow input { flex: 1; padding: 3px 9px 0; background: #1d1d1d; }
.panel { display: flex; justify-content: flex-start; gap: 9px; height: 29px; padding: 0 10px 0 12px; font-size: 14px; color: #ddd; text-shadow: 0 1px 2px #222; }
.grip { width: 14px; height: 7px; margin-left: auto; }
.down { transform: rotate(90deg); }
.transform { display: flex; flex-direction: column; gap: 4px; padding: 10px 11px 0 10px; background: #383838; }
.trio { display: grid; grid-template-columns: 119px 129px 5px 18px; grid-auto-rows: 24px; column-gap: 12px; row-gap: 1px; align-items: center; margin-bottom: -1px; text-shadow: 0 1px 2px #222; }
.trio label { text-align: right; padding-top: 2px; }
.trio input { height: 24px; text-align: center; background: #565656; padding-top: 1px; text-shadow: none; }
.trio input:first-of-type { border-radius: 5px 5px 0 0; }
.trio input:last-of-type { border-radius: 0 0 5px 5px; }
.trio i { width: 5px; height: 5px; border-radius: 50%; background: #bbb; }
.lock { width: 18px; height: 16px; }
.rot { margin-top: 4px; }
.sub { justify-content: flex-start; gap: 9px; height: 32px; margin: 5px 0 0 6px; padding-top: 2px; color: #ddd; }

.status { display: flex; align-items: center; height: 27px; padding: 5px 32px 0 7px; background: #303030; color: #999; }
.hint { display: flex; align-items: center; gap: 8px; }
.ms { width: 20px; height: 24px; }
.h1 { width: 131px; }
.h2 { width: 181px; }
.h3 { width: 311px; }
.h4 { width: 81px; }
.stats { margin-left: auto; }

.notes { position: absolute; inset: 0; pointer-events: none; color: #ffd800; font-family: Lato, sans-serif; }
.frame { position: absolute; border: 5px solid #ffd800; }
.f-tools { left: 308px; top: 19px; width: 933px; height: 62px; }
.f-view { left: 58px; right: 337px; top: 105px; bottom: 128px; }
.f-time { left: 50px; right: 339px; bottom: 7px; height: 114px; }
.f-props { right: 0; width: 352px; top: 399px; bottom: 11px; }
.callout { position: absolute; left: 34px; top: 70px; }
.note { position: absolute; white-space: nowrap; }
.big { font-size: 87px; line-height: 100px; }
.small { font-size: 32px; line-height: 42px; }
.n-tools { left: 1270px; top: -4px; }
.n-mode { left: 220px; top: 176px; }
.n-view { left: 611px; top: 202px; }
.n-props { left: 1610px; top: 302px; }
.n-time { left: 896px; top: 909px; }
```
